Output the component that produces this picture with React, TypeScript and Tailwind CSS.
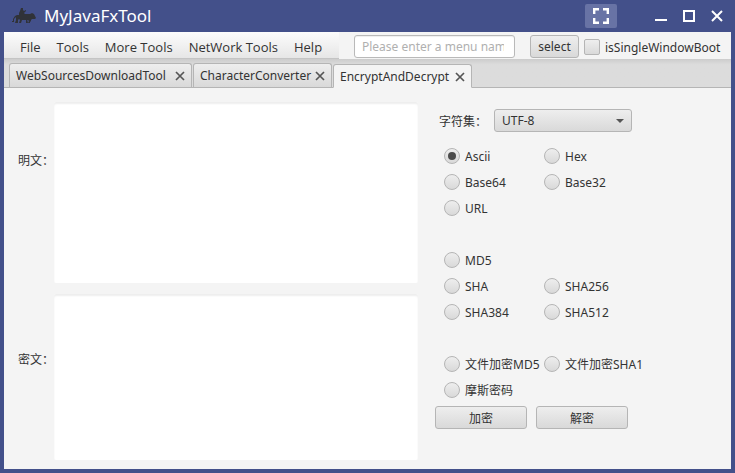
import { useState } from "react";

const menus = ["File", "Tools", "More Tools", "NetWork Tools", "Help"];
const tabs = [
  { name: "WebSourcesDownloadTool", width: "w-[183px]" },
  { name: "CharacterConverter", width: "w-[139px]" },
  { name: "EncryptAndDecrypt", width: "w-[139px]" },
];
const groups = [
  ["Ascii", "Hex", "Base64", "Base32", "URL"],
  ["MD5", "", "SHA", "SHA256", "SHA384", "SHA512"],
  ["文件加密MD5", "文件加密SHA1", "摩斯密码"],
];

const raised = "border border-[#b5b5b5] bg-linear-to-b from-[#eeeeee] to-[#d9d9d9]";

function RiderLogo() {
  return (
    <svg className="h-4 w-6" viewBox="0 0 24 16" fill="#303238" aria-hidden="true">
      <path d="M9 0h2v2l1 1 2-1v1l-2 2 1 1h5l2-1 2 1 1 2 1 2-1 1-3 0-1 1v1l-1 1 0 1h-2l1-2-1-1-4 0-2 0-1 3H7l1-3-1-1-1 1-1 3H3l1-3V9L2 11v2H1v-2l2-3 2-1 2 0 0-2 1-2z" />
      <path d="M14 11h1l1 4h-2zM5 11h1v4H5zM0 13h2v1H0z" />
    </svg>
  );
}

function CloseMark() {
  return (
    <svg className="size-2.5" viewBox="0 0 10 10" stroke="#555" strokeWidth="1.7" aria-hidden="true">
      <path d="M1 1l8 8M9 1L1 9" />
    </svg>
  );
}

function TitleBar() {
  return (
    <header className="flex h-8 items-center pr-1 pl-3 text-white">
      <RiderLogo />
      <h1 className="ml-2 flex-1 text-[17px] leading-6">MyJavaFxTool</h1>
      <button aria-label="Full screen" className="mr-[30px] flex h-6 w-8 items-center justify-center rounded-xs bg-[#6873a5]">
        <svg className="size-4" viewBox="0 0 16 16" fill="none" stroke="white" strokeWidth="2.4" aria-hidden="true">
          <path d="M1.2 6V1.2H6M10 1.2h4.8V6M14.8 10v4.8H10M6 14.8H1.2V10" />
        </svg>
      </button>
      <button aria-label="Minimize" className="flex w-7 justify-center">
        <svg className="size-3" viewBox="0 0 12 12" stroke="white" strokeWidth="2" aria-hidden="true">
          <path d="M0 10h12" />
        </svg>
      </button>
      <button aria-label="Maximize" className="flex w-7 justify-center">
        <svg className="size-3" viewBox="0 0 12 12" fill="none" stroke="white" strokeWidth="2" aria-hidden="true">
          <path d="M1 1h10v10H1z" />
        </svg>
      </button>
      <button aria-label="Close" className="flex w-7 justify-center">
        <svg className="size-3" viewBox="0 0 12 12" stroke="white" strokeWidth="2" aria-hidden="true">
          <path d="M1 1l10 10M11 1L1 11" />
        </svg>
      </button>
    </header>
  );
}

function MenuRow() {
  return (
    <div className="flex h-[27px] items-start">
      <nav className="flex h-[27px] w-[335px] items-center gap-4 border-b border-[#c4c4c4] bg-linear-to-b from-[#fcfcfc] to-[#e6e6e6] pt-[3px] pl-4 font-['Open_Sans',sans-serif] text-[13px]">
        {menus.map((m) => (
          <button key={m} className="whitespace-nowrap">{m}</button>
        ))}
      </nav>
      <input
        aria-label="Menu name"
        placeholder="Please enter a menu name"
        className="mt-[3px] ml-[15px] h-[23px] w-40 min-w-0 flex-1 rounded-[3px] border border-[#b9b9b9] bg-white pr-2.5 pl-[7px] shadow-[inset_0_1px_1px_#eeeeee] placeholder:text-[#b0b0b0]"
      />
      <button className={`mt-[3px] ml-[15px] h-[23px] w-[49px] rounded-[3px] ${raised}`}>select</button>
      <label className="mt-[3px] mr-[7px] ml-[5px] flex h-6 items-center gap-[5px]">
        <input type="checkbox" className={`size-4 appearance-none rounded-[2px] ${raised}`} />
        <span className="w-[119px] pt-0.5">isSingleWindowBoot</span>
      </label>
    </div>
  );
}

function Tabs() {
  return (
    <div role="tablist" className="flex h-[29px] items-end gap-px border-b border-[#b5b5b5] bg-linear-to-b from-[#cccccc] to-[#dcdcdc] to-20% pl-[5px]">
      {tabs.map((t, i) => (
        <div
          key={t.name}
          className={`flex h-6 items-center justify-between rounded-t-[3px] border border-[#b5b5b5] px-[6px] pt-px ${t.width} ${
            i === 2 ? "-mb-px border-b-[#f4f4f4] bg-[#f4f4f4]" : "border-b-0 bg-linear-to-b from-[#eeeeee] to-[#d9d9d9]"
          }`}
        >
          <button role="tab" aria-selected={i === 2}>{t.name}</button>
          <button aria-label={`Close ${t.name}`}><CloseMark /></button>
        </div>
      ))}
    </div>
  );
}

export default function App() {
  const [mode, setMode] = useState("Ascii");
  const area = "min-w-0 flex-1 resize-none rounded-[2px] bg-white p-2 shadow-[inset_0_2px_2px_#eeeeee] outline-none";
  return (
    <div className="flex min-h-screen flex-col bg-[#43508a] font-['Noto_Sans','Noto_Sans_CJK_SC',sans-serif] text-[12px] leading-4 text-[#333333]">
      <TitleBar />
      <div className="mx-1 mb-1 flex flex-1 flex-col bg-[#f4f4f4]">
        <MenuRow />
        <Tabs />
        <main className="flex flex-1">
          <div className="flex flex-1 flex-col gap-[11px] pt-[14px] pb-[9px] pl-[14px]">
            <div className="flex flex-[181]">
              <label htmlFor="plain" className="w-9 pt-[51px] whitespace-nowrap">明文：</label>
              <textarea id="plain" className={area} />
            </div>
            <div className="flex flex-[166]">
              <label htmlFor="cipher" className="w-9 pt-[58px] whitespace-nowrap">密文：</label>
              <textarea id="cipher" className={area} />
            </div>
          </div>
          <div className="w-[313px] pt-[21px] pl-[17px]">
            <div className="flex items-center pl-1">
              <label htmlFor="charset" className="w-[55px] pt-0.5">字符集：</label>
              <div className="grid items-center">
                <select id="charset" className={`col-start-1 row-start-1 h-[23px] w-[138px] appearance-none rounded-[3px] px-[7px] ${raised}`}>
                  <option>UTF-8</option>
                </select>
                <svg className="pointer-events-none col-start-1 row-start-1 mr-2 h-1 w-2 justify-self-end" viewBox="0 0 8 4" fill="#555" aria-hidden="true">
                  <path d="M0 0h8L4 4z" />
                </svg>
              </div>
            </div>
            <div className="mt-[11px] flex flex-col gap-[26px] pl-[9px]">
              {groups.map((g, i) => (
                <div key={i} className="grid grid-cols-[100px_auto] justify-start">
                  {g.map((n) =>
                    n ? (
                      <label key={n} className="flex h-[26px] items-center gap-[5px] whitespace-nowrap">
                        <input
                          type="radio"
                          name="mode"
                          checked={mode === n}
                          onChange={() => setMode(n)}
                          className={`grid size-4 shrink-0 appearance-none place-items-center rounded-full before:size-2 before:rounded-full checked:before:bg-[#4c4c4c] ${raised}`}
                        />
                        <span className="pt-0.5">{n}</span>
                      </label>
                    ) : (
                      <span key="blank" />
                    )
                  )}
                </div>
              ))}
            </div>
            <div className="mt-[3px] flex gap-[9px]">
              <button className={`h-[23px] w-[92px] rounded-[3px] pt-0.5 ${raised}`}>加密</button>
              <button className={`h-[23px] w-[92px] rounded-[3px] pt-0.5 ${raised}`}>解密</button>
            </div>
          </div>
        </main>
      </div>
    </div>
  );
}
